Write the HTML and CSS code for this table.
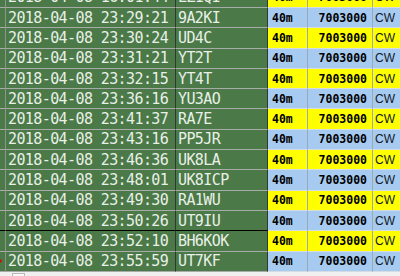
FILE: index.html
```html
<!DOCTYPE html>
<html lang="en">
<head>
    <meta charset="UTF-8">
    <title>QSO log</title>
    <link rel="stylesheet" href="styles.css">
</head>
<body>

<!-- log grid: row header | date/time | call | band | freq | mode -->
<div class="log">
    <div class="row yel"><div class="hd"></div><div class="dt">2018-04-08 16:01:44</div><div class="call">LZ1QI</div><div class="band">40m</div><div class="freq">7003000</div><div class="mode">CW</div></div>
    <div class="row blu"><div class="hd"></div><div class="dt">2018-04-08 23:29:21</div><div class="call">9A2KI</div><div class="band">40m</div><div class="freq">7003000</div><div class="mode">CW</div></div>
    <div class="row yel"><div class="hd"></div><div class="dt">2018-04-08 23:30:24</div><div class="call">UD4C</div><div class="band">40m</div><div class="freq">7003000</div><div class="mode">CW</div></div>
    <div class="row blu"><div class="hd"></div><div class="dt">2018-04-08 23:31:21</div><div class="call">YT2T</div><div class="band">40m</div><div class="freq">7003000</div><div class="mode">CW</div></div>
    <div class="row yel"><div class="hd"></div><div class="dt">2018-04-08 23:32:15</div><div class="call">YT4T</div><div class="band">40m</div><div class="freq">7003000</div><div class="mode">CW</div></div>
    <div class="row blu"><div class="hd"></div><div class="dt">2018-04-08 23:36:16</div><div class="call">YU3AO</div><div class="band">40m</div><div class="freq">7003000</div><div class="mode">CW</div></div>
    <div class="row yel"><div class="hd"></div><div class="dt">2018-04-08 23:41:37</div><div class="call">RA7E</div><div class="band">40m</div><div class="freq">7003000</div><div class="mode">CW</div></div>
    <div class="row blu"><div class="hd"></div><div class="dt">2018-04-08 23:43:16</div><div class="call">PP5JR</div><div class="band">40m</div><div class="freq">7003000</div><div class="mode">CW</div></div>
    <div class="row yel"><div class="hd"></div><div class="dt">2018-04-08 23:46:36</div><div class="call">UK8LA</div><div class="band">40m</div><div class="freq">7003000</div><div class="mode">CW</div></div>
    <div class="row blu"><div class="hd"></div><div class="dt">2018-04-08 23:48:01</div><div class="call">UK8ICP</div><div class="band">40m</div><div class="freq">7003000</div><div class="mode">CW</div></div>
    <div class="row yel"><div class="hd"></div><div class="dt">2018-04-08 23:49:30</div><div class="call">RA1WU</div><div class="band">40m</div><div class="freq">7003000</div><div class="mode">CW</div></div>
    <div class="row blu sel-above"><div class="hd"></div><div class="dt">2018-04-08 23:50:26</div><div class="call">UT9IU</div><div class="band">40m</div><div class="freq">7003000</div><div class="mode">CW</div></div>
    <div class="row yel"><div class="hd"></div><div class="dt">2018-04-08 23:52:10</div><div class="call">BH6KOK</div><div class="band">40m</div><div class="freq">7003000</div><div class="mode">CW</div></div>
    <div class="row blu"><div class="hd"><i class="cur"></i></div><div class="dt">2018-04-08 23:55:59</div><div class="call">UT7KF</div><div class="band">40m</div><div class="freq">7003000</div><div class="mode">CW</div></div>
</div>

<div class="hscroll"><div class="thumb"></div></div>

</body>
</html>
```

FILE: styles.css
```css
html, body { margin: 0; padding: 0; }
body {
    width: 400px;
    height: 276px;
    overflow: hidden;
    background: #f0f0f0;
}

.log { margin-top: -12.3px; }

.row {
    display: grid;
    grid-template-columns: 6px 170px 92px 40px 65px 1fr;
    height: 20.3px;
}
.row > div {
    box-sizing: border-box;
    display: flex;
    align-items: center;
    white-space: nowrap;
    overflow: hidden;
}

/* green part */
.hd, .dt, .call {
    background: #4b7947;
    border-bottom: 1px solid #a8aca8;
    border-right: 1px solid #303830;
}
.hd { border-right-color: #8c948c; }
.dt, .call {
    padding-left: 2px;
    color: #e8f0e8;
    font: 15px "DejaVu Sans Mono", monospace;
    letter-spacing: -0.6px;
}
.sel-above .hd, .sel-above .dt, .sel-above .call { border-bottom-color: #000; }

/* coloured part */
.band, .freq, .mode {
    border-bottom: 1px solid #d6dce4;
    border-right: 1px solid #9aa8b8;
    color: #000;
}
.yel .band, .yel .freq, .yel .mode { background: #ffff00; }
.blu .band, .blu .freq, .blu .mode { background: #a6caf0; }

.band, .freq {
    font: bold 11.5px "DejaVu Sans Mono", monospace;
}
.band { padding-left: 4px; }
.freq { justify-content: flex-end; padding-right: 5px; }
.mode {
    padding-left: 2px;
    border-right: none;
    color: #101828;
    font: 12px "Liberation Sans Narrow", "Liberation Sans", sans-serif;
}

.cur {
    display: block;
    width: 0;
    height: 0;
    margin-left: -1px;
    border-left: 3px solid #e00000;
    border-top: 3px solid transparent;
    border-bottom: 3px solid transparent;
}

.hscroll {
    height: 10px;
    padding: 1px 0 0 12px;
}
.hscroll .thumb {
    width: 11px;
    height: 10px;
    border: 1px solid #b8b8b8;
    background: #f8f8f8;
}
```
